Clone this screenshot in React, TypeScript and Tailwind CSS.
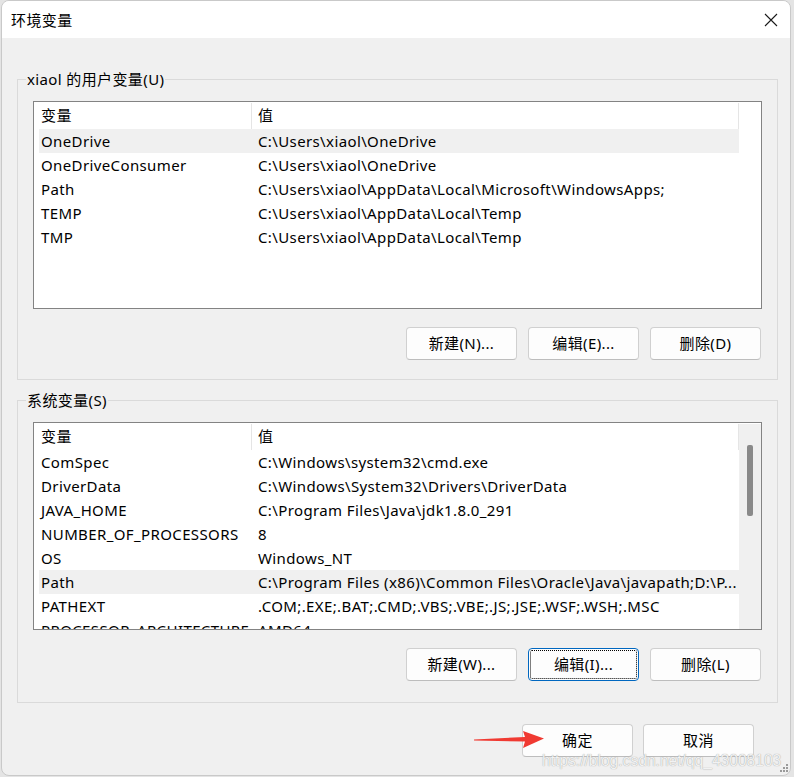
import React from 'react';

type Row = [string, string];

const userVars: Row[] = [
    ['OneDrive', 'C:\\Users\\xiaol\\OneDrive'],
    ['OneDriveConsumer', 'C:\\Users\\xiaol\\OneDrive'],
    ['Path', 'C:\\Users\\xiaol\\AppData\\Local\\Microsoft\\WindowsApps;'],
    ['TEMP', 'C:\\Users\\xiaol\\AppData\\Local\\Temp'],
    ['TMP', 'C:\\Users\\xiaol\\AppData\\Local\\Temp'],
];

const sysVars: Row[] = [
    ['ComSpec', 'C:\\Windows\\system32\\cmd.exe'],
    ['DriverData', 'C:\\Windows\\System32\\Drivers\\DriverData'],
    ['JAVA_HOME', 'C:\\Program Files\\Java\\jdk1.8.0_291'],
    ['NUMBER_OF_PROCESSORS', '8'],
    ['OS', 'Windows_NT'],
    ['Path', 'C:\\Program Files (x86)\\Common Files\\Oracle\\Java\\javapath;D:\\P...'],
    ['PATHEXT', '.COM;.EXE;.BAT;.CMD;.VBS;.VBE;.JS;.JSE;.WSF;.WSH;.MSC'],
    ['PROCESSOR_ARCHITECTURE', 'AMD64'],
];

function VarList({ rows, selected, scroll }: { rows: Row[]; selected: number; scroll?: boolean }) {
    return (
        <div className="ml-[15px] flex h-[208px] w-[729px] overflow-hidden border border-[#838383] bg-white">
            <div className="ml-[5px] w-[700px] shrink-0">
                {/* header */}
                <div className="grid h-[27px] grid-cols-[213px_487px] pt-px">
                    <div className="flex items-center border-r border-[#e5e5e5] pl-[2px] pb-px">变量</div>
                    <div className="flex items-center border-r border-[#e5e5e5] pl-[6px] pb-px">值</div>
                </div>
                {rows.map(([name, value], i) => (
                    <div
                        key={name + i}
                        className={`grid h-[24px] grid-cols-[213px_487px] items-center whitespace-nowrap ${i === selected ? 'bg-[#f0f0f0]' : ''}`}
                    >
                        <div className="overflow-hidden pl-[2px]">{name}</div>
                        <div className="overflow-hidden pl-[6px]">{value}</div>
                    </div>
                ))}
            </div>
            {scroll ? (
                <div className="mt-px w-[22px] shrink-0 bg-[#f0f0f0] pl-[8px] pt-[21px]">
                    <div className="h-[71px] w-[6px] rounded-[2px] bg-[#8a8a8a]" />
                </div>
            ) : null}
        </div>
    );
}

function Btn({ label, focused }: { label: string; focused?: boolean }) {
    return (
        <button
            className={`flex h-[33px] w-[111px] items-center justify-center rounded-[4px] border bg-[#fdfdfd] text-[15px] text-black ${
                focused
                    ? 'border-[#0067c0] outline-1 outline-offset-[-3px] outline-dotted outline-black'
                    : 'border-[#d0d0d0] border-b-[#bdbdbd]'
            }`}
        >
            {label}
        </button>
    );
}

function Group({ title, bottom, children }: { title: string; bottom: string; children: React.ReactNode }) {
    return (
        <fieldset className={`ml-[15px] w-[761px] border border-[#dadada] ${bottom}`}>
            <legend className="ml-[8px] px-px leading-[22px]">{title}</legend>
            <div className="pt-[11px]">{children}</div>
        </fieldset>
    );
}

export default function App() {
    return (
        <div className="h-[777px] w-[794px] overflow-hidden bg-[#e4e4e4] font-['Segoe_UI','Noto_Sans','Noto_Sans_CJK_SC',sans-serif] text-[15px] tracking-[0.38px] text-black">
            <div className="relative ml-px h-[776px] w-[790px] overflow-hidden rounded-[8px] border border-[#c9c9c9] bg-[#f0f0f0]">
                {/* Title bar */}
                <div className="flex h-[37px] items-center justify-between bg-white pl-[9px] pr-[10px]">
                    <span className="pt-px">环境变量</span>
                    <svg width="14" height="14" viewBox="0 0 14 14" className="mr-[2px]">
                        <path d="M1 1 L13 13 M13 1 L1 13" stroke="#1a1a1a" strokeWidth="1.1" />
                    </svg>
                </div>

                <div className="pt-[30px]">
                    <Group title="xiaol 的用户变量(U)" bottom="pb-[19px]">
                        <VarList rows={userVars} selected={0} />
                        <div className="mt-[18px] flex w-[744px] justify-end gap-[11px] pr-px">
                            <Btn label="新建(N)..." />
                            <Btn label="编辑(E)..." />
                            <Btn label="删除(D)" />
                        </div>
                    </Group>

                    <div className="h-[9px]" />

                    <Group title="系统变量(S)" bottom="pb-[21px]">
                        <VarList rows={sysVars} selected={5} scroll />
                        <div className="mt-[18px] flex w-[744px] justify-end gap-[11px] pr-px">
                            <Btn label="新建(W)..." />
                            <Btn label="编辑(I)..." focused />
                            <Btn label="删除(L)" />
                        </div>
                    </Group>

                    <div className="mt-[21px] flex justify-end gap-[10px] pr-[36px]">
                        <Btn label="确定" />
                        <Btn label="取消" />
                    </div>
                </div>

                {/* annotation arrow */}
                <svg className="absolute left-[470px] top-[727px]" width="76" height="24" viewBox="0 0 76 24">
                    <polygon points="2,11.5 53,9 51,3 72,10.5 51,20 53,13.5 2,12.5" fill="#f03a32" />
                </svg>

                {/* watermark */}
                <div className="absolute left-[540px] top-[748px] whitespace-nowrap font-['Liberation_Sans',Arial,sans-serif] text-[15.6px] tracking-normal text-[#f2f2f2] [text-shadow:0_0_1px_#8f8f8f]">
                    https://blog.csdn.net/qq_43008103
                </div>

                {/* resize grip */}
                <svg className="absolute bottom-[2px] right-[1px]" width="10" height="10" viewBox="0 0 10 10">
                    <rect x="7" y="1" width="2" height="2" fill="#9a9a9a" />
                    <rect x="4" y="4" width="2" height="2" fill="#9a9a9a" />
                    <rect x="7" y="4" width="2" height="2" fill="#9a9a9a" />
                    <rect x="1" y="7" width="2" height="2" fill="#9a9a9a" />
                    <rect x="4" y="7" width="2" height="2" fill="#9a9a9a" />
                    <rect x="7" y="7" width="2" height="2" fill="#9a9a9a" />
                </svg>
            </div>
        </div>
    );
}
